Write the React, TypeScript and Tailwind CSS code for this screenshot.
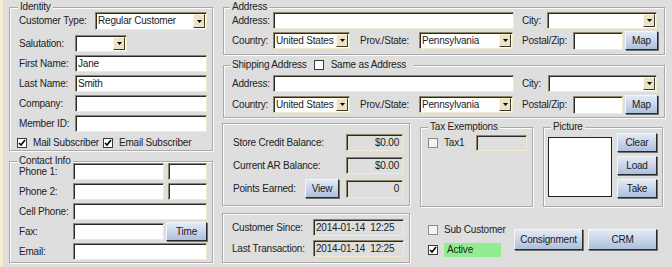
import React from 'react';

const inset =
  'border border-t-[#8f8667] border-l-[#8f8667] border-b-[#f2eacb] border-r-[#f2eacb] shadow-[inset_1px_1px_0_#2c2a22]';
const group = 'border border-[#a9a9a9] shadow-[inset_1px_1px_0_#fbfbfb,1px_1px_0_#fbfbfb]';
const legendCls = 'px-[2px] leading-[12px] bg-[#dedede]';

function Box({ className = '', children, right, gray }: { className?: string; children?: React.ReactNode; right?: boolean; gray?: boolean }) {
  return (
    <div
      className={`${inset} ${gray ? 'bg-[#dedede]' : 'bg-white'} flex items-center px-[2px] whitespace-pre overflow-hidden ${right ? 'justify-end pr-[3px]' : ''} ${className}`}
    >
      {children}
    </div>
  );
}

function Combo({ className = '', value = '' }: { className?: string; value?: string }) {
  return (
    <div className={`${inset} bg-white flex items-stretch ${className}`}>
      <span className="flex-1 flex items-center pl-[2px] whitespace-nowrap overflow-hidden">{value}</span>
      <span className="w-[12px] my-[1px] mr-[1px] bg-[#ebe3c3] border border-t-[#fbf7e8] border-l-[#fbf7e8] border-b-[#3c382c] border-r-[#3c382c] flex items-center justify-center">
        <svg width="5" height="3" viewBox="0 0 5 3">
          <path d="M0 0h5L2.5 3z" fill="#000" />
        </svg>
      </span>
    </div>
  );
}

function Btn({ className = '', children }: { className?: string; children: React.ReactNode }) {
  return (
    <div
      className={`flex items-center justify-center bg-linear-to-b from-[#e4eaf5] via-[#c9d5ea] to-[#aebfdd] border border-t-[#f5f5f5] border-l-[#f5f5f5] border-b-[#2a2a2a] border-r-[#2a2a2a] shadow-[1px_1px_0_#707070] text-[#1a1a1a] shrink-0 ${className}`}
    >
      {children}
    </div>
  );
}

function Check({ checked, light }: { checked?: boolean; light?: boolean }) {
  return (
    <span
      className={`w-[10px] h-[10px] border ${light ? 'border-[#8a8a8a] bg-[#f4f4f4]' : 'border-[#3a3a3a] bg-white'} flex items-center justify-center shrink-0`}
    >
      {checked && (
        <svg width="8" height="8" viewBox="0 0 8 8">
          <path d="M1 4l2 2 4-5" fill="none" stroke="#000" strokeWidth="1.6" />
        </svg>
      )}
    </span>
  );
}

export default function App() {
  return (
    <div className="w-[672px] h-[267px] overflow-hidden bg-[#dedede] border-l-[3px] border-l-[#f3ecd0] flex text-[10px] tracking-[-0.2px] leading-[12px] text-[#222] font-['Liberation_Sans',Arial,sans-serif]">
      {/* Left column */}
      <div className="flex flex-col pl-[6px] pt-[1px]">
        <fieldset className={`w-[204px] h-[150px] ${group}`}>
          <legend className={`ml-[8px] ${legendCls}`}>Identity</legend>
          <div className="pl-[9px] flex flex-col">
            <div className="flex items-center h-[18px] -mt-[1px]">
              <span className="w-[76px]">Customer Type:</span>
              <Combo className="w-[112px] h-[18px]" value="Regular Customer" />
            </div>
            <div className="flex items-center mt-[5px]">
              <span className="w-[56px]">Salutation:</span>
              <Combo className="w-[52px] h-[17px]" />
            </div>
            <div className="flex items-center mt-[3px]">
              <span className="w-[56px]">First Name:</span>
              <Box className="w-[132px] h-[17px]">Jane</Box>
            </div>
            <div className="flex items-center mt-[3px]">
              <span className="w-[56px]">Last Name:</span>
              <Box className="w-[132px] h-[17px]">Smith</Box>
            </div>
            <div className="flex items-center mt-[3px]">
              <span className="w-[56px]">Company:</span>
              <Box className="w-[132px] h-[17px]" />
            </div>
            <div className="flex items-center mt-[3px]">
              <span className="w-[56px]">Member ID:</span>
              <Box className="w-[132px] h-[17px]" />
            </div>
            <div className="flex items-center h-[10px] mt-[6px] -ml-[2px]">
              <Check checked />
              <span className="ml-[6px]">Mail Subscriber</span>
              <span className="ml-[4px]">
                <Check checked />
              </span>
              <span className="ml-[6px]">Email Subscriber</span>
            </div>
          </div>
        </fieldset>

        <fieldset className={`w-[204px] h-[108px] mt-[4px] ${group}`}>
          <legend className={`ml-[7px] ${legendCls}`}>Contact Info</legend>
          <div className="pl-[9px] flex flex-col -mt-[4px]">
            <div className="flex items-center">
              <span className="w-[54px]">Phone 1:</span>
              <Box className="w-[91px] h-[17px]" />
              <Box className="w-[39px] h-[17px] ml-[4px]" />
            </div>
            <div className="flex items-center mt-[3px]">
              <span className="w-[54px]">Phone 2:</span>
              <Box className="w-[91px] h-[17px]" />
              <Box className="w-[39px] h-[17px] ml-[4px]" />
            </div>
            <div className="flex items-center mt-[3px]">
              <span className="w-[54px]">Cell Phone:</span>
              <Box className="w-[134px] h-[17px]" />
            </div>
            <div className="flex items-center h-[17px] mt-[3px]">
              <span className="w-[54px]">Fax:</span>
              <Box className="w-[91px] h-[17px]" />
              <Btn className="w-[41px] h-[19px] ml-[2px]">Time</Btn>
            </div>
            <div className="flex items-center mt-[3px]">
              <span className="w-[54px]">Email:</span>
              <Box className="w-[134px] h-[17px]" />
            </div>
          </div>
        </fieldset>
      </div>

      {/* Right column */}
      <div className="flex flex-col ml-[9px] pt-[1px]">
        <fieldset className={`w-[442px] h-[54px] ml-[1px] ${group}`}>
          <legend className={`ml-[6px] ${legendCls}`}>Address</legend>
          <div className="pl-[8px] flex flex-col -mt-[1px]">
            <div className="flex items-center">
              <span className="w-[41px]">Address:</span>
              <Box className="w-[241px] h-[17px]" />
              <span className="w-[25px] ml-[8px]">City:</span>
              <Combo className="w-[110px] h-[17px]" />
            </div>
            <div className="flex items-center h-[17px] mt-[3px]">
              <span className="w-[41px]">Country:</span>
              <Combo className="w-[77px] h-[17px]" value="United States" />
              <span className="w-[59px] ml-[10px]">Prov./State:</span>
              <Combo className="w-[94px] h-[17px]" value="Pennsylvania" />
              <span className="w-[51px] ml-[9px]">Postal/Zip:</span>
              <Box className="w-[50px] h-[18px]" />
              <Btn className="w-[33px] h-[19px] ml-[2px]">Map</Btn>
            </div>
          </div>
        </fieldset>

        <fieldset className={`w-[442px] h-[59px] ml-[1px] mt-[4px] ${group}`}>
          <legend className={`ml-[6px] ${legendCls} flex items-center`}>
            <span>Shipping Address</span>
            <span className="ml-[7px]">
              <Check />
            </span>
            <span className="ml-[7px] pr-[6px]">Same as Address</span>
          </legend>
          <div className="pl-[8px] flex flex-col mt-[4px]">
            <div className="flex items-center">
              <span className="w-[41px]">Address:</span>
              <Box className="w-[241px] h-[17px]" />
              <span className="w-[26px] ml-[8px]">City:</span>
              <Combo className="w-[109px] h-[17px]" />
            </div>
            <div className="flex items-center h-[17px] mt-[4px]">
              <span className="w-[41px]">Country:</span>
              <Combo className="w-[77px] h-[17px]" value="United States" />
              <span className="w-[59px] ml-[10px]">Prov./State:</span>
              <Combo className="w-[94px] h-[17px]" value="Pennsylvania" />
              <span className="w-[51px] ml-[9px]">Postal/Zip:</span>
              <Box className="w-[50px] h-[18px]" />
              <Btn className="w-[33px] h-[19px] ml-[2px]">Map</Btn>
            </div>
          </div>
        </fieldset>

        {/* Middle row */}
        <div className="flex items-start mt-[3px]">
          <div className={`w-[188px] h-[83px] mt-[2px] pl-[10px] pt-[10px] flex flex-col ${group}`}>
            <div className="flex items-center">
              <span className="w-[113px]">Store Credit Balance:</span>
              <Box gray right className="w-[57px] h-[17px]">$0.00</Box>
            </div>
            <div className="flex items-center mt-[6px]">
              <span className="w-[113px]">Current AR Balance:</span>
              <Box gray right className="w-[57px] h-[17px]">$0.00</Box>
            </div>
            <div className="flex items-center mt-[5px]">
              <span className="w-[72px]">Points Earned:</span>
              <Btn className="w-[34px] h-[19px]">View</Btn>
              <Box gray right className="w-[57px] h-[18px] ml-[7px]">0</Box>
            </div>
          </div>

          <fieldset className={`w-[113px] h-[86px] ml-[10px] ${group}`}>
            <legend className={`ml-[7px] ${legendCls}`}>Tax Exemptions</legend>
            <div className="flex items-center h-[17px] mt-[1px] pl-[7px]">
              <Check light />
              <span className="ml-[6px] w-[32px]">Tax1</span>
              <Box gray className="w-[51px] h-[16px]" />
            </div>
          </fieldset>

          <fieldset className={`w-[120px] h-[86px] ml-[10px] ${group}`}>
            <legend className={`ml-[7px] ${legendCls}`}>Picture</legend>
            <div className="flex items-start pl-[4px]">
              <div className="w-[64px] h-[60px] mt-[4px] border border-[#222] bg-white" />
              <div className="flex flex-col ml-[5px] gap-[4px]">
                <Btn className="w-[40px] h-[19px]">Clear</Btn>
                <Btn className="w-[40px] h-[19px]">Load</Btn>
                <Btn className="w-[40px] h-[19px]">Take</Btn>
              </div>
            </div>
          </fieldset>
        </div>

        {/* Bottom row */}
        <div className="flex items-start mt-[6px]">
          <div className={`w-[188px] h-[50px] pl-[9px] pt-[5px] flex flex-col ${group}`}>
            <div className="flex items-center">
              <span className="w-[81px]">Customer Since:</span>
              <Box gray className="w-[91px] h-[17px]">2014-01-14  12:25</Box>
            </div>
            <div className="flex items-center mt-[4px]">
              <span className="w-[81px]">Last Transaction:</span>
              <Box gray className="w-[91px] h-[17px]">2014-01-14  12:25</Box>
            </div>
          </div>

          <div className="flex flex-col ml-[18px] w-[75px] pt-[12px]">
            <div className="flex items-center h-[10px]">
              <Check light />
              <span className="ml-[6px] whitespace-nowrap">Sub Customer</span>
            </div>
            <div className="flex items-center h-[14px] mt-[8px]">
              <Check checked />
              <span className="ml-[6px] w-[57px] h-[14px] bg-[#90ee90] pl-[3px] flex items-center">Active</span>
            </div>
          </div>

          <Btn className="w-[69px] h-[21px] ml-[11px] mt-[16px]">Consignment</Btn>
          <Btn className="w-[69px] h-[21px] ml-[5px] mt-[16px]">CRM</Btn>
        </div>
      </div>
    </div>
  );
}
